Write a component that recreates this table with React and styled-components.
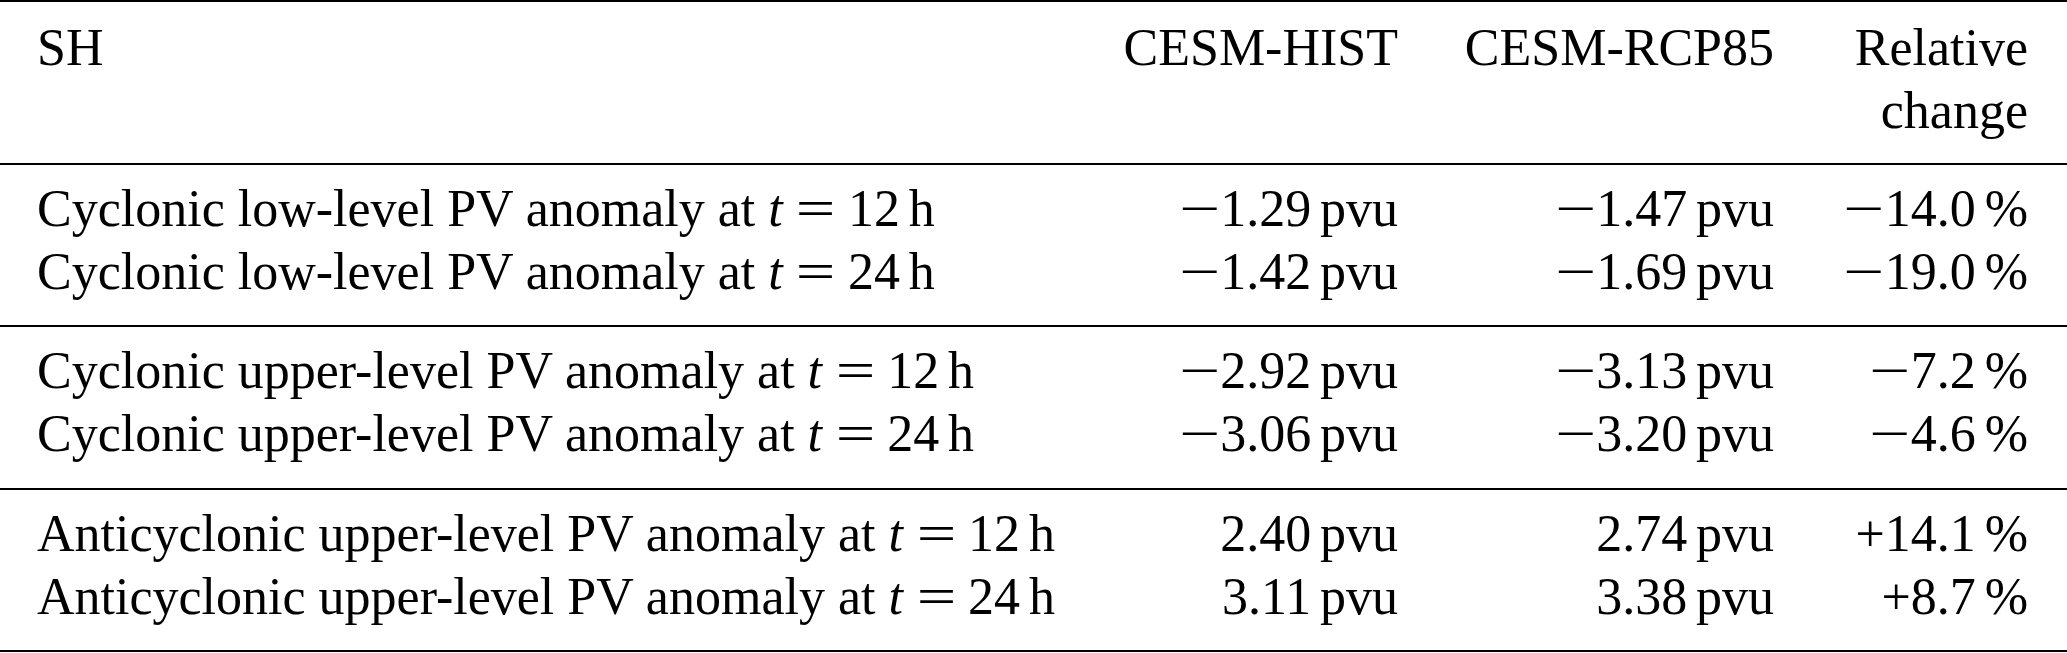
import React from 'react';
import styled, { createGlobalStyle } from 'styled-components';

const GlobalStyle = createGlobalStyle`
  html,
  body {
    margin: 0;
    padding: 0;
    background: #ffffff;
  }
`;

const Table = styled.table`
  width: 2067px;
  border-collapse: separate;
  border-spacing: 0;
  table-layout: fixed;
  font-family: 'Liberation Serif', 'Times New Roman', serif;
  font-size: 52px;
  line-height: 63px;
  color: #000000;
`;

const HeadCell = styled.th`
  width: ${p => p.$w}px;
  box-sizing: border-box;
  padding: 14px ${p => p.$padRight || 0}px 20.5px ${p => p.$padLeft || 0}px;
  text-align: ${p => p.$align};
  vertical-align: top;
  font-weight: 400;
  white-space: nowrap;
  border-top: 2px solid #000000;
  border-bottom: 2px solid #000000;
`;

const Group = styled.tbody`
  tr:first-child td {
    padding-top: 12px;
  }
  tr:last-child td {
    padding-bottom: 22.5px;
    border-bottom: 2px solid #000000;
  }
`;

const Cell = styled.td`
  box-sizing: border-box;
  padding: 0 ${p => p.$padRight || 0}px 0 ${p => p.$padLeft || 0}px;
  text-align: ${p => p.$align};
  vertical-align: top;
  white-space: nowrap;
`;

const Var = styled.i`
  font-style: italic;
`;

const Eq = styled.span`
  display: inline-block;
  margin: 0 0.33em 0 0.36em;
  transform: scaleX(1.35);
`;

// math minus in the source is wider than the text one
const Minus = styled.span`
  display: inline-block;
  margin-right: 0.1em;
  transform: scaleX(1.4);
  transform-origin: 60% 50%;
`;

const Unit = styled.span`
  margin-left: 0.17em;
`;

const columns = [
  { key: 'label', w: 1100, align: 'left', padLeft: 37, title: 'SH' },
  { key: 'hist', w: 298, align: 'right', title: 'CESM-HIST' },
  { key: 'rcp', w: 376, align: 'right', title: 'CESM-RCP85' },
  { key: 'rel', w: 293, align: 'right', padRight: 39, title: <>Relative<br />change</> },
];

const groups = [
  [
    { kind: 'Cyclonic', level: 'low-level', t: 12, hist: '\u22121.29', rcp: '\u22121.47', rel: '\u221214.0' },
    { kind: 'Cyclonic', level: 'low-level', t: 24, hist: '\u22121.42', rcp: '\u22121.69', rel: '\u221219.0' },
  ],
  [
    { kind: 'Cyclonic', level: 'upper-level', t: 12, hist: '\u22122.92', rcp: '\u22123.13', rel: '\u22127.2' },
    { kind: 'Cyclonic', level: 'upper-level', t: 24, hist: '\u22123.06', rcp: '\u22123.20', rel: '\u22124.6' },
  ],
  [
    { kind: 'Anticyclonic', level: 'upper-level', t: 12, hist: '2.40', rcp: '2.74', rel: '+14.1' },
    { kind: 'Anticyclonic', level: 'upper-level', t: 24, hist: '3.11', rcp: '3.38', rel: '+8.7' },
  ],
];

const Num = ({ value }) => {
  if (value.startsWith('\u2212')) {
    return <><Minus>{'\u2212'}</Minus>{value.slice(1)}</>;
  }
  return <>{value}</>;
};

const renderCell = (key, row) => {
  if (key === 'label') {
    return (
      <>
        {row.kind} {row.level} PV anomaly at <Var>t</Var><Eq>=</Eq>{row.t}<Unit>h</Unit>
      </>
    );
  }
  if (key === 'rel') {
    return <><Num value={row.rel} /><Unit>%</Unit></>;
  }
  return <><Num value={row[key]} /><Unit>pvu</Unit></>;
};

const App = () => {
  return (
    <>
      <GlobalStyle />
      <Table>
        <thead>
          <tr>
            {columns.map(c => (
              <HeadCell key={c.key} $w={c.w} $align={c.align} $padLeft={c.padLeft} $padRight={c.padRight}>
                {c.title}
              </HeadCell>
            ))}
          </tr>
        </thead>
        {groups.map((rows, gi) => (
          <Group key={gi}>
            {rows.map((row, ri) => (
              <tr key={ri}>
                {columns.map(c => (
                  <Cell key={c.key} $align={c.align} $padLeft={c.padLeft} $padRight={c.padRight}>
                    {renderCell(c.key, row)}
                  </Cell>
                ))}
              </tr>
            ))}
          </Group>
        ))}
      </Table>
    </>
  );
};

export default App;
